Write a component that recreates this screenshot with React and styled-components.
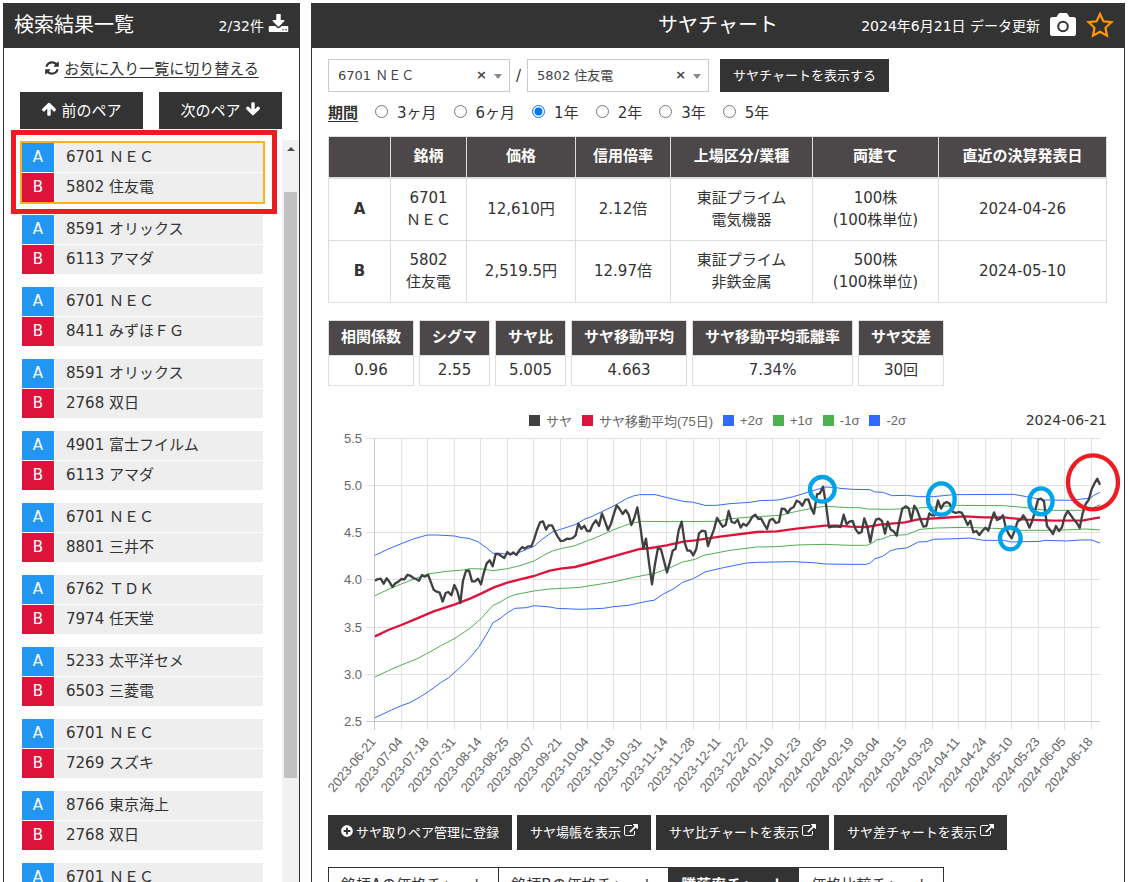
import React, { useState } from "react";
import styled, { createGlobalStyle, css } from "styled-components";
import { FaPlusCircle } from "react-icons/fa";

const pairs = [
  ["6701 ＮＥＣ", "5802 住友電"],
  ["8591 オリックス", "6113 アマダ"],
  ["6701 ＮＥＣ", "8411 みずほＦＧ"],
  ["8591 オリックス", "2768 双日"],
  ["4901 富士フイルム", "6113 アマダ"],
  ["6701 ＮＥＣ", "8801 三井不"],
  ["6762 ＴＤＫ", "7974 任天堂"],
  ["5233 太平洋セメ", "6503 三菱電"],
  ["6701 ＮＥＣ", "7269 スズキ"],
  ["8766 東京海上", "2768 双日"],
  ["6701 ＮＥＣ", "8411 みずほＦＧ"],
];

const periods = ["3ヶ月", "6ヶ月", "1年", "2年", "3年", "5年"];

const stocks = [
  {
    side: "A",
    code: "6701",
    name: "ＮＥＣ",
    price: "12,610円",
    ratio: "2.12倍",
    market: "東証プライム",
    sector: "電気機器",
    lot: "100株",
    unit: "(100株単位)",
    date: "2024-04-26",
  },
  {
    side: "B",
    code: "5802",
    name: "住友電",
    price: "2,519.5円",
    ratio: "12.97倍",
    market: "東証プライム",
    sector: "非鉄金属",
    lot: "500株",
    unit: "(100株単位)",
    date: "2024-05-10",
  },
];

const stats = [
  ["相関係数", "0.96"],
  ["シグマ", "2.55"],
  ["サヤ比", "5.005"],
  ["サヤ移動平均", "4.663"],
  ["サヤ移動平均乖離率", "7.34%"],
  ["サヤ交差", "30回"],
];

const legend = [
  ["サヤ", "#404040"],
  ["サヤ移動平均(75日)", "#dc143c"],
  ["+2σ", "#3369ff"],
  ["+1σ", "#4caf50"],
  ["-1σ", "#4caf50"],
  ["-2σ", "#3369ff"],
];

const tabs = [
  "銘柄Aの価格チャート",
  "銘柄Bの価格チャート",
  "騰落率チャート",
  "価格比較チャート",
];

const yLabels = ["5.5", "5.0", "4.5", "4.0", "3.5", "3.0", "2.5"];

const xLabels = [
  "2023-06-21", "2023-07-04", "2023-07-18", "2023-07-31", "2023-08-14",
  "2023-08-25", "2023-09-07", "2023-09-21", "2023-10-04", "2023-10-18",
  "2023-10-31", "2023-11-14", "2023-11-28", "2023-12-11", "2023-12-22",
  "2024-01-10", "2024-01-23", "2024-02-05", "2024-02-19", "2024-03-04",
  "2024-03-15", "2024-03-29", "2024-04-11", "2024-04-24", "2024-05-10",
  "2024-05-23", "2024-06-05", "2024-06-18",
];

// series are stored on a grid three times finer than the plot
const series = {
  plus2:
    "165,376 205,357 244,341 280,327 322,315 350,315 403,318 425,323 447,325 475,336 500,354 519,370 540,370 562,373 589,371 620,358 642,349 665,329 700,304 722,298 765,284 795,267 810,262 846,245 881,228 920,206 940,198 958,194 1005,194 1050,205 1090,214 1120,217 1155,226 1190,226 1230,221 1290,217 1320,212 1375,210 1420,200 1470,185 1515,171 1550,173 1560,175 1598,178 1650,179 1665,186 1690,187 1715,197 1760,196 1795,200 1840,200 1900,194 2080,193 2120,200 2170,210 2260,211 2285,207 2310,205 2322,196 2340,187",
  plus1:
    "165,497 205,478 244,462 280,448 324,432 380,424 430,420 450,416 490,417 519,422 562,416 600,407 642,393 670,376 700,362 722,356 765,347 800,333 825,324 881,299 930,281 965,274 1050,275 1190,274 1230,266 1310,260 1380,256 1430,244 1480,234 1515,229 1590,233 1620,233 1640,237 1710,238 1795,234 1850,231 1910,226 2050,227 2120,233 2160,239 2200,241 2280,241 2310,237 2340,224",
  mean:
    "165,619 205,600 244,585 290,566 341,544 403,524 450,506 483,491 520,473 562,458 600,448 642,438 690,422 722,416 765,411 810,399 880,379 960,357 993,354 1040,346 1090,335 1125,331 1200,320 1310,306 1370,304 1430,296 1515,287 1550,287 1590,290 1640,291 1680,284 1755,277 1795,268 1860,264 1935,259 1990,262 2050,262 2120,269 2200,272 2290,271 2340,262",
  minus1:
    "165,741 205,722 244,705 290,687 322,670 365,646 403,626 450,595 483,566 519,526 540,517 562,503 585,494 642,483 690,477 765,473 780,472 880,456 940,442 1005,430 1045,415 1088,396 1125,388 1152,376 1230,361 1310,351 1370,350 1430,345 1515,343 1590,346 1640,346 1655,340 1670,330 1690,326 1710,317 1760,314 1800,298 1850,294 1940,292 2050,296 2080,301 2210,301 2300,297 2340,300",
  minus2:
    "165,863 215,840 244,827 270,818 300,801 322,787 365,756 385,744 420,713 450,683 475,653 500,613 519,578 540,566 562,548 585,535 620,533 642,527 690,531 710,535 780,538 850,535 880,530 925,526 980,514 1002,511 1030,492 1060,477 1088,457 1120,446 1155,426 1210,413 1280,399 1310,397 1420,395 1480,398 1515,402 1590,403 1640,403 1652,398 1665,386 1688,379 1712,362 1730,357 1760,354 1795,336 1820,335 1840,328 1910,326 1950,324 1990,331 2050,331 2075,336 2160,334 2175,331 2240,333 2285,330 2315,330 2340,339",
  spread:
    "165,452 172,448 182,446 191,461 200,445 208,455 217,471 226,460 235,455 244,447 253,448 262,435 271,437 280,444 288,447 297,452 306,435 314,440 324,434 332,455 341,479 350,485 359,488 368,515 377,489 385,486 394,496 403,465 412,484 421,519 429,452 438,423 447,421 456,454 465,454 474,446 483,463 491,430 500,400 509,391 518,409 527,372 536,372 545,379 553,384 562,366 571,374 580,367 589,375 598,361 607,351 615,356 624,349 634,349 642,329 651,300 660,277 669,274 678,299 686,286 696,286 704,303 713,320 722,333 731,332 740,326 749,327 758,324 767,316 775,281 784,297 793,287 801,303 810,303 818,284 828,271 837,288 846,250 855,274 864,300 873,281 881,254 890,226 899,237 908,252 917,240 926,254 934,285 943,264 952,232 961,290 970,355 978,326 987,398 996,463 1005,402 1014,354 1023,358 1032,393 1041,427 1050,395 1058,362 1067,356 1076,301 1085,275 1094,338 1102,362 1111,362 1120,376 1129,356 1137,310 1146,302 1156,304 1164,348 1173,322 1182,298 1191,264 1200,278 1208,290 1217,285 1226,243 1235,276 1244,279 1253,269 1262,293 1270,281 1279,287 1288,276 1297,260 1306,254 1315,267 1323,265 1332,282 1341,297 1349,271 1358,266 1368,279 1377,276 1385,236 1394,237 1403,249 1412,236 1421,231 1430,212 1439,217 1447,227 1456,209 1465,208 1474,236 1482,251 1491,193 1500,190 1509,170 1518,224 1527,292 1536,290 1545,290 1553,289 1562,291 1571,254 1580,283 1588,275 1598,273 1607,298 1616,310 1625,306 1633,265 1642,291 1651,336 1659,293 1668,269 1677,266 1686,273 1695,311 1703,275 1712,299 1721,304 1730,317 1739,270 1747,236 1757,229 1766,235 1774,270 1783,227 1792,242 1801,267 1810,290 1819,288 1828,250 1836,256 1844,256 1854,211 1863,236 1872,220 1880,216 1889,221 1898,245 1907,249 1916,246 1925,248 1934,265 1943,285 1951,272 1960,307 1969,303 1978,315 1987,303 1996,293 2005,302 2013,274 2022,247 2031,270 2040,266 2049,256 2057,292 2066,312 2075,325 2084,302 2093,274 2102,269 2110,256 2119,270 2128,293 2137,272 2146,240 2154,209 2163,206 2172,214 2181,288 2190,299 2199,312 2208,288 2217,303 2226,292 2234,260 2243,243 2252,255 2261,268 2270,278 2279,294 2288,250 2297,222 2306,210 2315,178 2323,161 2332,146 2340,164",
};

// [cx, cy, rx, ry, color]
const marks = [
  [1507, 178, 37, 37, "#00a2e8"],
  [1864, 207, 40, 47, "#00a2e8"],
  [2163, 214, 35, 39, "#00a2e8"],
  [2071, 325, 31, 33, "#00a2e8"],
  [2319, 157, 75, 81, "#ed1c24"],
];

const iconPaths = {
  refresh:
    "M1639 1056q0 5-1 7-64 268-268 434.5t-478 166.5q-146 0-282.5-55t-243.5-157l-129 129q-19 19-45 19t-45-19-19-45v-448q0-26 19-45t45-19h448q26 0 45 19t19 45-19 45l-137 137q71 66 161 102t187 36q134 0 250-65t186-179q11-17 53-117 8-23 30-23h192q13 0 22.5 9.5t9.5 22.5zm25-800v448q0 26-19 45t-45 19h-448q-26 0-45-19t-19-45 19-45l138-138q-148-137-349-137-134 0-250 65t-186 179q-11 17-53 117-8 23-30 23h-199q-13 0-22.5-9.5t-9.5-22.5v-7q65-268 270-434.5t480-166.5q146 0 284 55.5t245 156.5l130-129q19-19 45-19t45 19 19 45z",
  download:
    "M1344 1344q0-26-19-45t-45-19-45 19-19 45 19 45 45 19 45-19 19-45zm256 0q0-26-19-45t-45-19-45 19-19 45 19 45 45 19 45-19 19-45zm128-224v320q0 40-28 68t-68 28h-1472q-40 0-68-28t-28-68v-320q0-40 28-68t68-28h465l135 136q58 56 136 56t136-56l136-136h464q40 0 68 28t28 68zm-325-569q17 41-14 70l-448 448q-18 19-45 19t-45-19l-448-448q-31-29-14-70 17-39 59-39h256v-448q0-26 19-45t45-19h256q26 0 45 19t19 45v448h256q42 0 59 39z",
  arrowUp:
    "M1675 971q0 51-37 90l-75 75q-38 38-91 38-54 0-90-38l-294-293v704q0 52-37.5 84.5t-90.5 32.5h-128q-53 0-90.5-32.5t-37.5-84.5v-704l-294 293q-36 38-90 38t-90-38l-75-75q-38-38-38-90 0-53 38-91l651-651q35-37 90-37 54 0 91 37l651 651q37 39 37 91z",
  external:
    "M1408 928v320q0 119-84.5 203.5t-203.5 84.5h-832q-119 0-203.5-84.5t-84.5-203.5v-832q0-119 84.5-203.5t203.5-84.5h704q14 0 23 9t9 23v64q0 14-9 23t-23 9h-704q-66 0-113 47t-47 113v832q0 66 47 113t113 47h832q66 0 113-47t47-113v-320q0-14 9-23t23-9h64q14 0 23 9t9 23zm384-864v512q0 26-19 45t-45 19-45-19l-176-176-652 652q-10 10-23 10t-23-10l-114-114q-10-10-10-23t10-23l652-652-176-176q-19-19-19-45t19-45 45-19h512q26 0 45 19t19 45z",
};

function Icon({ name, size, flip }) {
  return (
    <svg width={size} height={size} viewBox="0 0 1792 1792" fill="currentColor" aria-hidden="true">
      <path d={iconPaths[name]} transform={flip ? "rotate(180 896 896)" : undefined} />
    </svg>
  );
}

function CameraIcon() {
  return (
    <svg width="26" height="23" viewBox="0 0 26 23" aria-hidden="true">
      <path
        fill="currentColor"
        d="M2.5 4H6.5L8.5 .8Q9 0 10 0H16Q17 0 17.5 .8L19.5 4H23.5Q26 4 26 6.5V20.5Q26 23 23.5 23H2.5Q0 23 0 20.5V6.5Q0 4 2.5 4Z"
      />
      <circle cx="13" cy="13.5" r="4.8" fill="none" stroke="#333" strokeWidth="2" />
    </svg>
  );
}

function StarIcon() {
  return (
    <svg width="28" height="28" viewBox="0 0 28 28" aria-hidden="true">
      <path
        fill="none"
        stroke="currentColor"
        strokeWidth="2.2"
        d="M14 3L17.4 10.3L25.4 11.2L19.5 16.8L21 24.7L14 20.8L7 24.7L8.5 16.8L2.6 11.2L10.6 10.3Z"
      />
    </svg>
  );
}

function StockSelect({ label, value }) {
  return (
    <SelectBox>
      <select aria-label={label} defaultValue={value}>
        <option>{value}</option>
      </select>
      <ClearButton type="button">×</ClearButton>
      <Caret />
    </SelectBox>
  );
}

function SpreadChart() {
  const tickX = (i) => Math.floor(46.7 + i * 26.54) + 0.5;
  const tickY = (i) => Math.floor(6.3 + i * 47.2) + 0.5;

  return (
    <ChartSvg viewBox="0 0 779 368" role="img" aria-label="サヤチャート">
      {yLabels.map((label, i) => (
        <g key={label}>
          <line x1="38" x2="772" y1={tickY(i)} y2={tickY(i)} stroke={i === 6 ? "#c8c8c8" : "#e1e1e1"} />
          <text x="34" y={tickY(i) + 4} textAnchor="end">
            {label}
          </text>
        </g>
      ))}
      {xLabels.map((label, i) => (
        <g key={label}>
          <line x1={tickX(i)} x2={tickX(i)} y1="6" y2="298" stroke={i === 0 ? "#c8c8c8" : "#e1e1e1"} />
          <text transform={`translate(${tickX(i) + 2} 310) rotate(-50)`} textAnchor="end">
            {label}
          </text>
        </g>
      ))}
      <g transform="translate(-8 -2) scale(0.33333)" fill="none" strokeLinejoin="round">
        <polyline points={series.minus2} stroke="#3369ff" strokeWidth="3" />
        <polyline points={series.minus1} stroke="#4caf50" strokeWidth="3" />
        <polyline points={series.plus1} stroke="#4caf50" strokeWidth="3" />
        <polyline points={series.plus2} stroke="#3369ff" strokeWidth="3" />
        <polyline points={series.mean} stroke="#dc143c" strokeWidth="7" />
        <polyline points={series.spread} stroke="#404040" strokeWidth="7" />
        {marks.map(([cx, cy, rx, ry, color]) => (
          <ellipse key={cx} cx={cx} cy={cy} rx={rx} ry={ry} stroke={color} strokeWidth="13" />
        ))}
      </g>
    </ChartSvg>
  );
}

function App() {
  const [selected, setSelected] = useState(0);
  const [period, setPeriod] = useState("1年");
  const [tab, setTab] = useState(2);

  return (
    <>
      <GlobalStyle />
      <Page>
        <Panel>
          <ListHeader>
            <Title>検索結果一覧</Title>
            <HeaderTools>
              2/32件
              <HeaderButton type="button" aria-label="ダウンロード">
                <Icon name="download" size={21} />
              </HeaderButton>
            </HeaderTools>
          </ListHeader>
          <SwitchRow>
            <Icon name="refresh" size={16} />
            <a href="#favorite">お気に入り一覧に切り替える</a>
          </SwitchRow>
          <PairNav>
            <NavButton type="button">
              <Icon name="arrowUp" size={16} />
              前のペア
            </NavButton>
            <NavButton type="button">
              次のペア
              <Icon name="arrowUp" size={16} flip />
            </NavButton>
          </PairNav>
          <ListArea>
            <PairList>
              {pairs.map(([a, b], i) => (
                <PairItem key={i} $active={i === selected} onClick={() => setSelected(i)}>
                  <Side $color="#2196f3">A</Side>
                  <StockName>{a}</StockName>
                  <Side $color="#dc143c">B</Side>
                  <StockName>{b}</StockName>
                  {i === 0 && <RedFrame />}
                </PairItem>
              ))}
            </PairList>
            <ScrollTrack>
              <ScrollArrow />
              <ScrollThumb />
            </ScrollTrack>
          </ListArea>
        </Panel>

        <Panel>
          <ChartHeader>
            <Title>サヤチャート</Title>
            <HeaderTools $gap="10px">
              2024年6月21日 データ更新
              <HeaderButton type="button" aria-label="画像保存">
                <CameraIcon />
              </HeaderButton>
              <HeaderButton type="button" aria-label="お気に入り" $color="#ff9800">
                <StarIcon />
              </HeaderButton>
            </HeaderTools>
          </ChartHeader>
          <Content>
            <SearchRow>
              <StockSelect label="銘柄A" value="6701 ＮＥＣ" />
              <span>/</span>
              <StockSelect label="銘柄B" value="5802 住友電" />
              <ShowButton type="button">サヤチャートを表示する</ShowButton>
            </SearchRow>
            <PeriodRow>
              <legend>期間</legend>
              {periods.map((p) => (
                <label key={p}>
                  <input type="radio" name="period" checked={p === period} onChange={() => setPeriod(p)} />
                  {p}
                </label>
              ))}
            </PeriodRow>

            <StockTable>
              <colgroup>
                {[62, 76, 109, 95, 142, 126].map((w) => (
                  <col key={w} width={w} />
                ))}
                <col />
              </colgroup>
              <thead>
                <tr>
                  <th />
                  <th>銘柄</th>
                  <th>価格</th>
                  <th>信用倍率</th>
                  <th>上場区分/業種</th>
                  <th>両建て</th>
                  <th>直近の決算発表日</th>
                </tr>
              </thead>
              <tbody>
                {stocks.map((s) => (
                  <tr key={s.side}>
                    <th>{s.side}</th>
                    <td>
                      {s.code}
                      <br />
                      {s.name}
                    </td>
                    <td>{s.price}</td>
                    <td>{s.ratio}</td>
                    <td>
                      {s.market}
                      <br />
                      {s.sector}
                    </td>
                    <td>
                      {s.lot}
                      <br />
                      {s.unit}
                    </td>
                    <td>{s.date}</td>
                  </tr>
                ))}
              </tbody>
            </StockTable>

            <StatRow>
              {stats.map(([name, value]) => (
                <StatTable key={name}>
                  <thead>
                    <tr>
                      <th>{name}</th>
                    </tr>
                  </thead>
                  <tbody>
                    <tr>
                      <td>{value}</td>
                    </tr>
                  </tbody>
                </StatTable>
              ))}
            </StatRow>

            <LegendRow>
              <Legend>
                {legend.map(([name, color]) => (
                  <LegendItem key={name} $color={color}>
                    {name}
                  </LegendItem>
                ))}
              </Legend>
              <ChartDate>2024-06-21</ChartDate>
            </LegendRow>
            <SpreadChart />

            <ActionRow>
              <ActionButton type="button">
                <FaPlusCircle size={12} />
                サヤ取りペア管理に登録
              </ActionButton>
              {["サヤ場帳を表示", "サヤ比チャートを表示", "サヤ差チャートを表示"].map((name) => (
                <ActionButton type="button" key={name}>
                  {name}
                  <Icon name="external" size={14} />
                </ActionButton>
              ))}
            </ActionRow>

            <TabRow>
              {tabs.map((name, i) => (
                <Tab type="button" key={name} $active={i === tab} onClick={() => setTab(i)}>
                  {name}
                </Tab>
              ))}
            </TabRow>
          </Content>
        </Panel>
      </Page>
    </>
  );
}

export default App;

const GlobalStyle = createGlobalStyle`
  * {
    box-sizing: border-box;
  }
  body {
    margin: 0;
    color: #333;
    background: #fff;
    font-family: "DejaVu Sans", "Noto Sans CJK JP", sans-serif;
    font-size: 15px;
  }
  button, select {
    font-family: inherit;
  }
  svg {
    flex: none;
  }
`;

const Page = styled.div`
  height: 100vh;
  overflow: hidden;
  display: grid;
  grid-template-columns: 297px minmax(0, 1fr);
  gap: 11px;
  padding: 3px 4px 0 3px;
`;

const Panel = styled.section`
  display: flex;
  flex-direction: column;
  min-height: 0;
  border: 1px solid #333;
  border-bottom: 0;
`;

const ListHeader = styled.header`
  flex: none;
  height: 44px;
  display: flex;
  align-items: center;
  justify-content: space-between;
  padding: 0 10px 3px;
  color: #fff;
  background: #333;
`;

const ChartHeader = styled(ListHeader)`
  display: grid;
  grid-template-columns: 1fr auto 1fr;

  > :first-child {
    grid-column: 2;
  }
  > :last-child {
    justify-self: end;
  }
`;

const Title = styled.h1`
  margin: 0;
  font-size: 20px;
  font-weight: normal;
  line-height: 40px;
`;

const HeaderTools = styled.div`
  display: flex;
  align-items: center;
  gap: ${(props) => props.$gap || "4px"};
  font-size: 14px;
  white-space: nowrap;
`;

const HeaderButton = styled.button`
  display: flex;
  padding: 0;
  border: 0;
  background: none;
  color: ${(props) => props.$color || "#fff"};
  cursor: pointer;
`;

const SwitchRow = styled.div`
  display: flex;
  align-items: center;
  justify-content: center;
  gap: 4px;
  height: 44px;
  padding-bottom: 5px;

  a {
    color: #333;
    text-underline-offset: 3px;
  }
`;

const PairNav = styled.div`
  display: flex;
  gap: 16px;
  padding: 0 17px 0 16px;
`;

const NavButton = styled.button`
  flex: 1;
  display: flex;
  align-items: center;
  justify-content: center;
  gap: 4px;
  height: 37px;
  padding: 0 0 3px;
  border: 0;
  color: #fff;
  background: #333;
  font-size: 15px;
  cursor: pointer;
`;

const ListArea = styled.div`
  flex: 1;
  min-height: 0;
  display: flex;
  justify-content: space-between;
  padding-top: 11px;
`;

const PairList = styled.ul`
  flex: 1;
  margin: 0;
  padding: 3px 19px 0 18px;
  list-style: none;
`;

const PairItem = styled.li`
  position: relative;
  display: grid;
  grid-template-columns: 32px 1fr;
  grid-auto-rows: 29px;
  gap: 1px;
  margin-bottom: 13px;
  line-height: 28px;
  cursor: pointer;
  ${(props) =>
    props.$active &&
    css`
      outline: 2px solid #ffb020;
    `}
`;

const Side = styled.span`
  color: #fff;
  text-align: center;
  background: ${(props) => props.$color};
`;

const StockName = styled.span`
  padding-left: 11px;
  background: #eee;
`;

const RedFrame = styled.span`
  position: absolute;
  inset: -13px -14px -12px -11px;
  border: 5px solid #ed1c24;
  pointer-events: none;
`;

const ScrollTrack = styled.div`
  width: 17px;
  padding: 0 2px;
  background: #f1f1f1;
`;

const ScrollArrow = styled.div`
  width: 0;
  margin: 7px auto 41px;
  border: 4px solid transparent;
  border-top: 0;
  border-bottom-color: #505050;
`;

const ScrollThumb = styled.div`
  height: 79%;
  background: #c1c1c1;
`;

const Content = styled.div`
  padding: 11px 17px 0 16px;
`;

const SearchRow = styled.div`
  display: flex;
  align-items: center;
  gap: 6px;
`;

const SelectBox = styled.div`
  position: relative;
  width: 182px;

  select {
    appearance: none;
    width: 100%;
    height: 33px;
    padding: 0 40px 0 9px;
    border: 1px solid #ccc;
    border-radius: 0;
    color: #444;
    background: #fff;
    font-size: 13px;
  }
`;

const ClearButton = styled.button`
  position: absolute;
  top: 8px;
  right: 23px;
  padding: 0;
  border: 0;
  background: none;
  color: #444;
  font-size: 13px;
  font-weight: bold;
  line-height: 16px;
`;

const Caret = styled.span`
  position: absolute;
  top: 15px;
  right: 8px;
  border: 4px solid transparent;
  border-top: 5px solid #888;
  border-bottom: 0;
  pointer-events: none;
`;

const ShowButton = styled.button`
  height: 33px;
  margin-left: 5px;
  padding: 0 13px 3px;
  border: 0;
  color: #fff;
  background: #333;
  font-size: 13px;
  cursor: pointer;
`;

const PeriodRow = styled.fieldset`
  display: flex;
  align-items: center;
  gap: 17px;
  height: 44px;
  margin: 0;
  padding: 0 0 5px;
  border: 0;

  legend {
    float: left;
    padding: 0;
    font-weight: bold;
    text-decoration: underline;
    text-underline-offset: 3px;
  }
  label {
    display: flex;
    align-items: center;
    gap: 9px;
  }
  input {
    margin: 0;
  }
`;

const StockTable = styled.table`
  width: 100%;
  table-layout: fixed;
  border-collapse: collapse;
  line-height: 22px;
  text-align: center;

  th,
  td {
    padding: 8px 0 9px;
    border: 1px solid #ddd;
  }
  thead th {
    padding: 8px 0 10px;
    color: #fff;
    background: #4c4748;
    border-bottom-width: 2px;
  }
`;

const StatRow = styled.div`
  display: flex;
  gap: 5px;
  margin-top: 17px;
`;

const StatTable = styled.table`
  border-collapse: collapse;
  line-height: 22px;
  text-align: center;

  th {
    padding: 5px 12px 7px;
    border: 1px solid #ddd;
    color: #fff;
    background: #4c4748;
    white-space: nowrap;
  }
  td {
    padding: 3px 0 4px;
    border: 1px solid #ddd;
  }
`;

const LegendRow = styled.div`
  display: grid;
  grid-template-columns: 1fr auto 1fr;
  align-items: center;
  height: 20px;
  margin: 24px 0 2px;
`;

const Legend = styled.ul`
  grid-column: 2;
  display: flex;
  gap: 10px;
  margin: 0;
  padding: 0;
  list-style: none;
  color: #666;
  font-family: "Liberation Sans", "Noto Sans CJK JP", sans-serif;
  font-size: 13px;
`;

const LegendItem = styled.li`
  display: flex;
  align-items: center;
  gap: 6px;

  &::before {
    content: "";
    width: 11px;
    height: 11px;
    background: ${(props) => props.$color};
  }
`;

const ChartDate = styled.time`
  justify-self: end;
  font-size: 14px;
`;

const ChartSvg = styled.svg`
  display: block;
  width: 100%;
  overflow: visible;

  text {
    fill: #666;
    font-family: "Liberation Sans", sans-serif;
    font-size: 13px;
  }
`;

const ActionRow = styled.div`
  display: flex;
  gap: 5px;
  margin-top: 15px;
`;

const ActionButton = styled.button`
  display: flex;
  align-items: center;
  gap: 3px;
  height: 35px;
  padding: 0 13px 3px;
  border: 0;
  color: #fff;
  background: #333;
  font-size: 13px;
  white-space: nowrap;
  cursor: pointer;
`;

const TabRow = styled.div`
  display: flex;
  margin-top: 17px;
`;

const Tab = styled.button`
  height: 38px;
  padding: 0 12px 5px;
  border: 1px solid #333;
  border-left-width: 0;
  color: ${(props) => (props.$active ? "#fff" : "#333")};
  background: ${(props) => (props.$active ? "#333" : "#fff")};
  font-size: 15px;
  font-weight: ${(props) => (props.$active ? "bold" : "normal")};
  white-space: nowrap;
  cursor: pointer;

  &:first-child {
    border-left-width: 1px;
  }
`;
